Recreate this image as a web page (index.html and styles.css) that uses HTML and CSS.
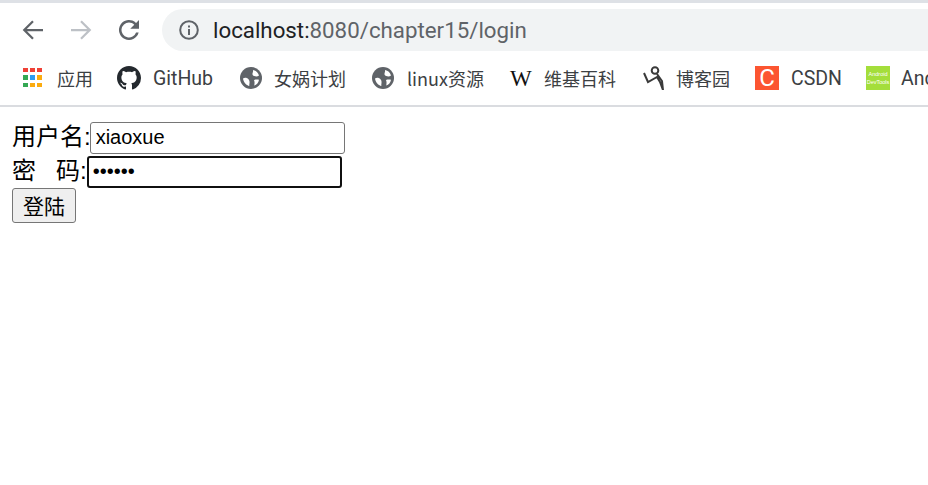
FILE: index.html
```html
<!DOCTYPE html>
<html lang="zh">
<head>
<meta charset="utf-8">
<title>login</title>
<link rel="stylesheet" href="styles.css">
</head>
<body>
<header class="chrome">
  <div class="toolbar">
    <svg class="nav" viewBox="0 0 24 24" width="30" height="30"><path d="M20 12H5M12 5l-7 7 7 7" fill="none" stroke="#5f6368" stroke-width="1.800"/></svg>
    <svg class="nav" viewBox="0 0 24 24" width="30" height="30"><path d="M4 12h15M12 5l7 7-7 7" fill="none" stroke="#bdc1c6" stroke-width="1.800"/></svg>
    <svg class="nav" viewBox="0 0 24 24" width="30" height="30"><path d="M17.650 6.350A8 8 0 1 0 19.730 14h-2.080A6 6 0 1 1 12 6c1.660 0 3.140.690 4.220 1.780L13 11h7V4z" fill="#5f6368"/></svg>
    <div class="omnibox">
      <svg class="info" viewBox="0 0 20 20" width="20" height="20"><circle cx="10" cy="10" r="8.800" fill="none" stroke="#5f6368" stroke-width="2"/><path d="M9 9h2v6H9zM9 5.500h2v2H9z" fill="#5f6368"/></svg>
      <span class="url"><span class="host">localhost:</span>8080/chapter15/login</span>
    </div>
  </div>
  <nav class="bookmarks">
    <a class="bm bm-apps"><svg viewBox="0 0 20 20" width="20" height="20"><rect x="0" y="0" width="5" height="4" fill="#ef4136"/><rect x="7" y="0" width="5" height="4" fill="#ef4136"/><rect x="14" y="0" width="5" height="4" fill="#ef4136"/><rect x="0" y="7" width="5" height="5" fill="#34a853"/><rect x="7" y="7" width="5" height="5" fill="#2d9cf4"/><rect x="14" y="7" width="5" height="5" fill="#fbab0f"/><rect x="0" y="15" width="5" height="4" fill="#34a853"/><rect x="7" y="15" width="5" height="4" fill="#fbab0f"/><rect x="14" y="15" width="5" height="4" fill="#fbab0f"/></svg><span>应用</span></a>
    <a class="bm bm-git"><svg viewBox="0 0 16 16" width="24" height="24"><path fill="#24292e" d="M8 0C3.580 0 0 3.580 0 8c0 3.540 2.290 6.530 5.470 7.590.4.070.55-.17.55-.38 0-.19-.01-.82-.01-1.490-2.010.37-2.530-.49-2.690-.94-.09-.23-.48-.94-.82-1.130-.28-.15-.68-.52-.01-.53.63-.01 1.080.58 1.230.82.72 1.210 1.870.87 2.330.66.070-.52.28-.87.51-1.070-1.780-.2-3.640-.89-3.640-3.950 0-.87.31-1.590.82-2.150-.08-.2-.36-1.020.08-2.120 0 0 .67-.21 2.200.82.64-.18 1.320-.27 2-.27s1.360.09 2 .27c1.530-1.040 2.200-.82 2.200-.82.44 1.100.16 1.920.08 2.120.51.56.82 1.270.82 2.150 0 3.070-1.870 3.750-3.650 3.950.29.25.54.73.54 1.480 0 1.070-.01 1.930-.01 2.200 0 .21.15.46.55.38A8.010 8.010 0 0 0 16 8c0-4.420-3.580-8-8-8z"/></svg><span class="latin">GitHub</span></a>
    <a class="bm bm-globe"><svg viewBox="0 0 22 22" width="22" height="22"><circle cx="11" cy="11" r="11" fill="#5f6368"/><path d="M13 3c3 .6 5.200 2.500 6 5.500-1.500 1.200-3.200 1-4.800.6-1.800-.5-2-2-1.500-3.300.3-.9.5-1.800.3-2.800zM3 11.500c2-1.200 4.200-.6 5.500.8 1.200 1.300 1.200 3.200.9 4.700-.1.700-.2 1.300 0 2-3-.6-5.800-3.600-6.400-7.500zM14 13c1.700-.6 3.500-.6 5-.2-.4 2.800-2.300 5-4.800 5.800.4-1.800.6-3.800-.2-5.600z" fill="#fff"/></svg><span>女娲计划</span></a>
    <a class="bm bm-globe2"><svg viewBox="0 0 22 22" width="22" height="22"><circle cx="11" cy="11" r="11" fill="#5f6368"/><path d="M13 3c3 .6 5.200 2.500 6 5.500-1.500 1.200-3.200 1-4.800.6-1.800-.5-2-2-1.500-3.300.3-.9.5-1.800.3-2.800zM3 11.500c2-1.200 4.200-.6 5.500.8 1.200 1.300 1.200 3.200.9 4.700-.1.700-.2 1.300 0 2-3-.6-5.800-3.600-6.400-7.500zM14 13c1.700-.6 3.500-.6 5-.2-.4 2.800-2.300 5-4.800 5.800.4-1.800.6-3.800-.2-5.600z" fill="#fff"/></svg><span>linux资源</span></a>
    <a class="bm bm-wiki"><b class="wiki">W</b><span>维基百科</span></a>
    <a class="bm bm-cnblogs"><svg viewBox="0 0 22 24" width="22" height="24"><path d="M1 7l4 9 9-5 3 5 3 8-1-9-5-7" fill="none" stroke="#3a3a3a" stroke-width="2"/><circle cx="12" cy="4.500" r="3.300" fill="none" stroke="#3a3a3a" stroke-width="2"/></svg><span>博客园</span></a>
    <a class="bm bm-csdn"><span class="csdn-logo">C</span><span class="latin">CSDN</span></a>
    <a class="bm bm-android"><span class="android-logo"><i>Android</i><i>DevTools</i></span><span class="latin">Android</span></a>
  </nav>
</header>
<main class="page">
  <form class="login">
    <div class="row"><label class="label-user">用户名:</label><input class="field" type="text" value="xiaoxue"></div>
    <div class="row"><label>密&nbsp;&nbsp;&nbsp;码:</label><input class="field focused" type="password" value="123456"></div>
    <div class="row row-submit"><button class="submit" type="button">登陆</button></div>
  </form>
</main>
</body>
</html>
```
FILE: styles.css
```css
html, body { margin: 0; padding: 0; background: #fff; overflow: hidden; }
body { width: 928px; height: 485px; font-family: "Liberation Sans", "Noto Sans CJK SC", sans-serif; }
.chrome { border-top: 3px solid #dee1e6; border-bottom: 2px solid #dadce0; height: 102px; overflow: hidden; }
.toolbar { display: flex; align-items: center; height: 54px; padding-left: 18px; box-sizing: border-box; }
.nav { flex: none; margin-right: 18px; }
.omnibox { flex: none; width: 800px; height: 42px; background: #f1f3f4; border-radius: 21px 0 0 21px; display: flex; align-items: center; padding-left: 17px; box-sizing: border-box; }
.info { flex: none; margin-right: 14px; }
.url { font: 22.300px/1 "Roboto", "Noto Sans", sans-serif; color: #5f6368; white-space: nowrap; }
.host { color: #202124; }
.bookmarks { display: flex; align-items: center; height: 42px; white-space: nowrap; font: 18px/1 "Noto Sans CJK SC", "Roboto", sans-serif; color: #3c4043; overflow: hidden; }
.bm { flex: none; display: flex; align-items: center; }
.bm svg { flex: none; }
.latin { font: 19.500px/1 "Roboto", sans-serif; padding-top: 2px; }
.bm-apps { margin-left: 23px; width: 94px; }
.bm-apps span { margin-left: 14px; }
.bm-git { width: 123px; }
.bm-git span { margin-left: 12px; }
.bm-globe { width: 132px; }
.bm-globe span { margin-left: 12px; }
.bm-globe2 { width: 138px; }
.bm-globe2 span { margin-left: 13px; }
.bm-wiki { width: 133px; }
.wiki { font: 400 23px/1 "Liberation Serif", serif; color: #111; width: 22px; margin-right: 12px; }
.bm-cnblogs { width: 112px; }
.bm-cnblogs span { margin-left: 11px; }
.bm-csdn { width: 111px; }
.csdn-logo { width: 24px; height: 24px; background: #fc5531; color: #fff; font: 400 24px/24px "Roboto", sans-serif; text-align: center; margin-right: 12px; }
.android-logo { width: 24px; height: 24px; background: #a4de3b; color: #fff; display: flex; flex-direction: column; align-items: center; justify-content: center; margin-right: 11px; flex: none; overflow: hidden; }
.android-logo i { font: normal 5.500px/8px "Liberation Sans", sans-serif; }
.page { padding: 0 0 0 12px; font-size: 24px; color: #000; }
.login { margin: 0; padding-top: 14px; }
.row { display: flex; align-items: center; height: 34px; }
.row-submit { height: 32px; }
.row label { font: 24px/1 "Liberation Sans", "Noto Sans CJK SC", sans-serif; padding-bottom: 3px; }
.row .label-user { margin-right: -1px; }
.field { width: 255px; height: 32px; box-sizing: border-box; border: 1px solid #767676; border-radius: 3px; padding: 0 5px 2px; font: 20px "Liberation Sans", sans-serif; color: #000; background: #fff; margin: 0; outline: none; }
.focused { border: 2px solid #101010; padding: 0 4px 2px; }
.submit { width: 64px; height: 35px; box-sizing: border-box; border: 1px solid #767676; border-radius: 3px; background: #efefef; padding: 0; font: 21px/1 "Noto Sans CJK SC", sans-serif; color: #000; margin: 0; }
```
